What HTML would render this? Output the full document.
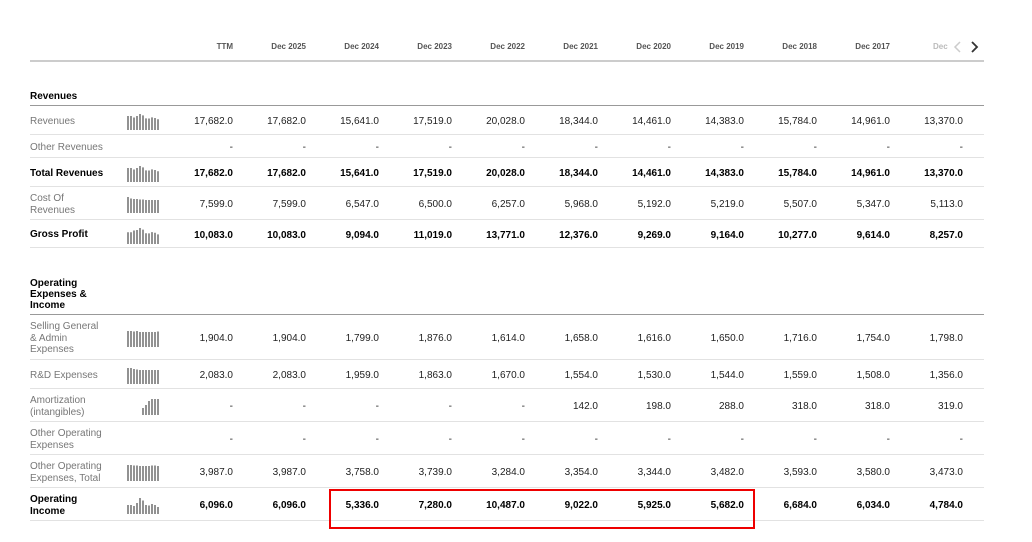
<!DOCTYPE html>
<html><head><meta charset="utf-8"><style>
*{margin:0;padding:0;box-sizing:border-box}
body{width:1032px;height:542px;background:#fff;font-family:"Liberation Sans",Arial,sans-serif;position:relative;overflow:hidden}
.t{position:absolute;left:30px;top:32px;width:954px}
.r{display:flex;align-items:center;border-bottom:1px solid #e2e2e2}
.r>div{flex-shrink:0}
.l{width:80px;padding-right:8px;font-size:10px;line-height:11.5px;color:#777;padding-top:3px}
.nw{white-space:nowrap}
.s{width:57px;height:100%;position:relative}
.s svg{position:absolute;left:16px;top:50%;margin-top:-8px}
.c{width:73px;text-align:right;padding-right:7px;font-size:10px;color:#222;padding-top:3px}
.c:last-child{width:87px;padding-right:21px}
.b .l,.b .c{color:#000;font-weight:bold}
.h{height:30px;border-bottom:2px solid #ccc}
.h .c{font-size:8px;font-weight:bold;color:#555;padding-top:1px}
.sec{align-items:flex-end;border-bottom:1px solid #999}
.sec .l{color:#000;font-weight:bold;font-size:10px;padding-bottom:3px;line-height:11px}
</style></head><body>
<div class="t">
<div class="r h"><div class="l"></div><div class="s"></div>
<div class="c">TTM</div><div class="c">Dec 2025</div><div class="c">Dec 2024</div><div class="c">Dec 2023</div><div class="c">Dec 2022</div><div class="c">Dec 2021</div><div class="c">Dec 2020</div><div class="c">Dec 2019</div><div class="c">Dec 2018</div><div class="c">Dec 2017</div><div class="c" style="text-align:left;padding-left:36px;overflow:hidden;white-space:nowrap;color:#bbb">Dec</div></div>
<div class="r sec" style="height:44px"><div class="l" style="width:200px">Revenues</div></div>
<div class="r" style="height:29px"><div class="l">Revenues</div><div class="s"><svg width="40" height="18"><path stroke="#777" stroke-width="1.6" d="M2 18V4M5 18V4M8 18V5.5M11 18V4M14 18V2M17 18V3.4M20 18V6.4M23 18V6.5M26 18V5.4M29 18V6M32 18V7.3"/></svg></div>
<div class="c">17,682.0</div><div class="c">17,682.0</div><div class="c">15,641.0</div><div class="c">17,519.0</div><div class="c">20,028.0</div><div class="c">18,344.0</div><div class="c">14,461.0</div><div class="c">14,383.0</div><div class="c">15,784.0</div><div class="c">14,961.0</div><div class="c">13,370.0</div></div>
<div class="r" style="height:23px"><div class="l nw">Other Revenues</div><div class="s"></div>
<div class="c">-</div><div class="c">-</div><div class="c">-</div><div class="c">-</div><div class="c">-</div><div class="c">-</div><div class="c">-</div><div class="c">-</div><div class="c">-</div><div class="c">-</div><div class="c">-</div></div>
<div class="r b" style="height:29px"><div class="l nw">Total Revenues</div><div class="s"><svg width="40" height="18"><path stroke="#777" stroke-width="1.6" d="M2 18V4M5 18V4M8 18V5.5M11 18V4M14 18V2M17 18V3.4M20 18V6.4M23 18V6.5M26 18V5.4M29 18V6M32 18V7.3"/></svg></div>
<div class="c">17,682.0</div><div class="c">17,682.0</div><div class="c">15,641.0</div><div class="c">17,519.0</div><div class="c">20,028.0</div><div class="c">18,344.0</div><div class="c">14,461.0</div><div class="c">14,383.0</div><div class="c">15,784.0</div><div class="c">14,961.0</div><div class="c">13,370.0</div></div>
<div class="r" style="height:33px"><div class="l">Cost Of Revenues</div><div class="s"><svg width="40" height="18"><path stroke="#777" stroke-width="1.6" d="M2 18V2M5 18V3.5M8 18V4M11 18V4M14 18V4.5M17 18V4.5M20 18V5M23 18V5M26 18V5M29 18V5M32 18V5"/></svg></div>
<div class="c">7,599.0</div><div class="c">7,599.0</div><div class="c">6,547.0</div><div class="c">6,500.0</div><div class="c">6,257.0</div><div class="c">5,968.0</div><div class="c">5,192.0</div><div class="c">5,219.0</div><div class="c">5,507.0</div><div class="c">5,347.0</div><div class="c">5,113.0</div></div>
<div class="r b" style="height:28px"><div class="l nw">Gross Profit</div><div class="s"><svg width="40" height="18"><path stroke="#777" stroke-width="1.6" d="M2 18V6.3M5 18V6.3M8 18V4.5M11 18V4M14 18V2M17 18V3.6M20 18V7.2M23 18V7.4M26 18V6.1M29 18V6.8M32 18V8.4"/></svg></div>
<div class="c">10,083.0</div><div class="c">10,083.0</div><div class="c">9,094.0</div><div class="c">11,019.0</div><div class="c">13,771.0</div><div class="c">12,376.0</div><div class="c">9,269.0</div><div class="c">9,164.0</div><div class="c">10,277.0</div><div class="c">9,614.0</div><div class="c">8,257.0</div></div>
<div class="r sec" style="height:67px"><div class="l" style="width:100px">Operating<br>Expenses &amp;<br>Income</div></div>
<div class="r" style="height:45px"><div class="l">Selling General &amp; Admin Expenses</div><div class="s"><svg width="40" height="18"><path stroke="#777" stroke-width="1.6" d="M2 18V2M5 18V2M8 18V2.5M11 18V2M14 18V3M17 18V3M20 18V3M23 18V3M26 18V3M29 18V3M32 18V2.5"/></svg></div>
<div class="c">1,904.0</div><div class="c">1,904.0</div><div class="c">1,799.0</div><div class="c">1,876.0</div><div class="c">1,614.0</div><div class="c">1,658.0</div><div class="c">1,616.0</div><div class="c">1,650.0</div><div class="c">1,716.0</div><div class="c">1,754.0</div><div class="c">1,798.0</div></div>
<div class="r" style="height:29px"><div class="l nw">R&amp;D Expenses</div><div class="s"><svg width="40" height="18"><path stroke="#777" stroke-width="1.6" d="M2 18V2M5 18V2M8 18V3M11 18V3.5M14 18V4M17 18V4M20 18V4M23 18V4M26 18V4M29 18V4M32 18V4"/></svg></div>
<div class="c">2,083.0</div><div class="c">2,083.0</div><div class="c">1,959.0</div><div class="c">1,863.0</div><div class="c">1,670.0</div><div class="c">1,554.0</div><div class="c">1,530.0</div><div class="c">1,544.0</div><div class="c">1,559.0</div><div class="c">1,508.0</div><div class="c">1,356.0</div></div>
<div class="r" style="height:33px"><div class="l">Amortization (intangibles)</div><div class="s"><svg width="40" height="18"><path stroke="#777" stroke-width="1.6" d="M17 18V11M20 18V8M23 18V4M26 18V2M29 18V2M32 18V2"/></svg></div>
<div class="c">-</div><div class="c">-</div><div class="c">-</div><div class="c">-</div><div class="c">-</div><div class="c">142.0</div><div class="c">198.0</div><div class="c">288.0</div><div class="c">318.0</div><div class="c">318.0</div><div class="c">319.0</div></div>
<div class="r" style="height:33px"><div class="l">Other Operating Expenses</div><div class="s"></div>
<div class="c">-</div><div class="c">-</div><div class="c">-</div><div class="c">-</div><div class="c">-</div><div class="c">-</div><div class="c">-</div><div class="c">-</div><div class="c">-</div><div class="c">-</div><div class="c">-</div></div>
<div class="r" style="height:33px"><div class="l">Other Operating Expenses, Total</div><div class="s"><svg width="40" height="18"><path stroke="#777" stroke-width="1.6" d="M2 18V2M5 18V2M8 18V2.5M11 18V2.5M14 18V3M17 18V3M20 18V3M23 18V3M26 18V2.5M29 18V2.5M32 18V3"/></svg></div>
<div class="c">3,987.0</div><div class="c">3,987.0</div><div class="c">3,758.0</div><div class="c">3,739.0</div><div class="c">3,284.0</div><div class="c">3,354.0</div><div class="c">3,344.0</div><div class="c">3,482.0</div><div class="c">3,593.0</div><div class="c">3,580.0</div><div class="c">3,473.0</div></div>
<div class="r b" style="height:33px"><div class="l">Operating Income</div><div class="s"><svg width="40" height="18"><path stroke="#777" stroke-width="1.6" d="M2 18V9M5 18V9M8 18V10M11 18V7M14 18V2M17 18V4.5M20 18V9M23 18V9.5M26 18V8M29 18V9M32 18V11"/></svg></div>
<div class="c">6,096.0</div><div class="c">6,096.0</div><div class="c">5,336.0</div><div class="c">7,280.0</div><div class="c">10,487.0</div><div class="c">9,022.0</div><div class="c">5,925.0</div><div class="c">5,682.0</div><div class="c">6,684.0</div><div class="c">6,034.0</div><div class="c">4,784.0</div></div>
</div>
<svg style="position:absolute;left:949px;top:40px" width="32" height="14"><path d="M11 2L6 7L11 12" fill="none" stroke="#ccc" stroke-width="1.5"/><path d="M23 2L28 7L23 12" fill="none" stroke="#333" stroke-width="1.8"/></svg>
<div style="position:absolute;left:329px;top:489px;width:426px;height:40px;border:2px solid #e00"></div>
</body></html>
